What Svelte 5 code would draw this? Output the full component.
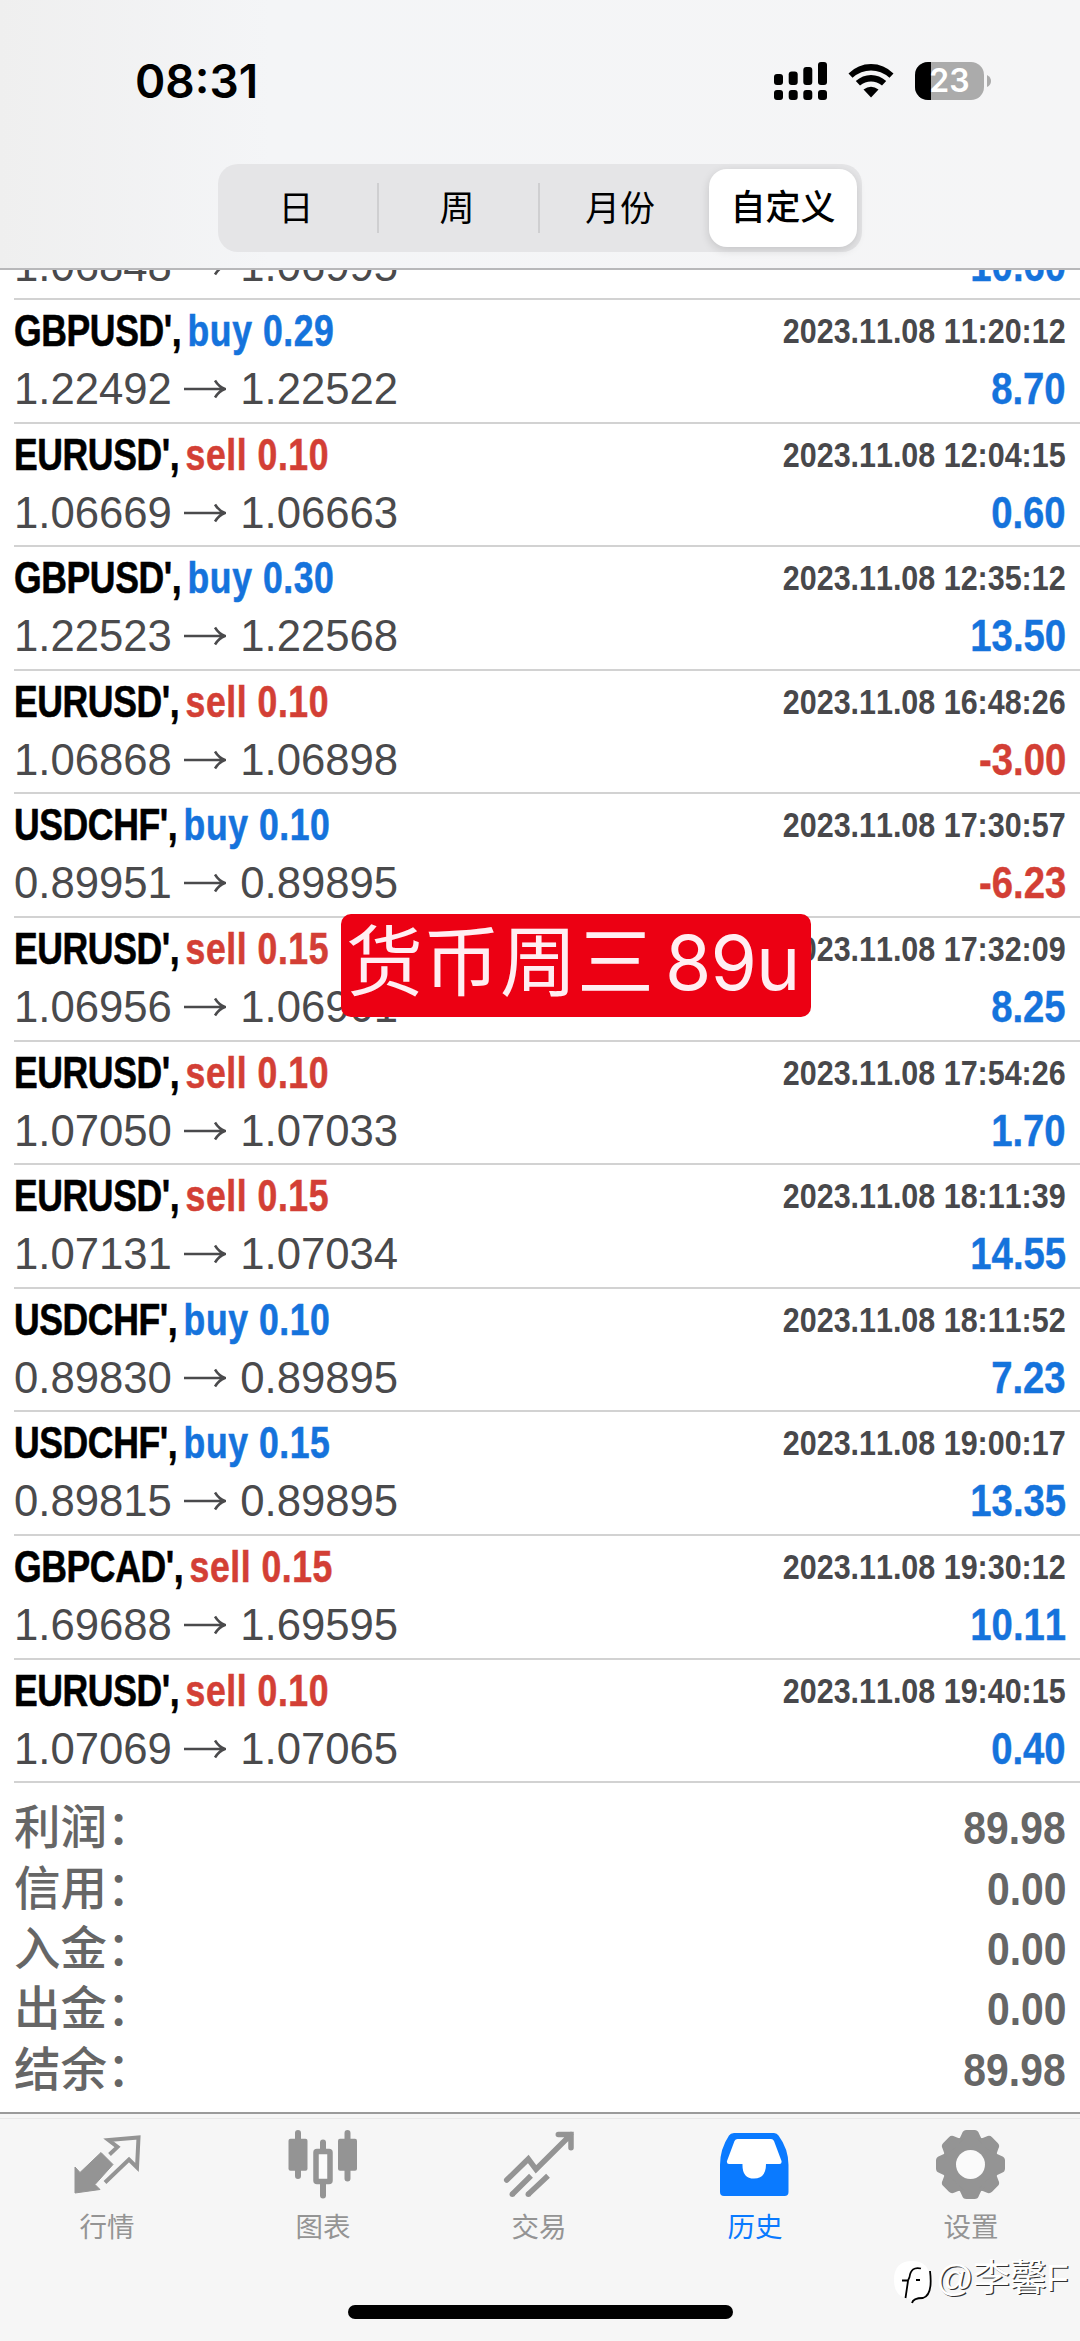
<script lang="ts">
	const segments = ['日', '周', '月份', '自定义'];

	const deals = [
		{ symbol: "GBPUSD'", side: 'buy', volume: '0.29', open: '1.22492', close: '1.22522', time: '2023.11.08 11:20:12', profit: '8.70' },
		{ symbol: "EURUSD'", side: 'sell', volume: '0.10', open: '1.06669', close: '1.06663', time: '2023.11.08 12:04:15', profit: '0.60' },
		{ symbol: "GBPUSD'", side: 'buy', volume: '0.30', open: '1.22523', close: '1.22568', time: '2023.11.08 12:35:12', profit: '13.50' },
		{ symbol: "EURUSD'", side: 'sell', volume: '0.10', open: '1.06868', close: '1.06898', time: '2023.11.08 16:48:26', profit: '-3.00' },
		{ symbol: "USDCHF'", side: 'buy', volume: '0.10', open: '0.89951', close: '0.89895', time: '2023.11.08 17:30:57', profit: '-6.23' },
		{ symbol: "EURUSD'", side: 'sell', volume: '0.15', open: '1.06956', close: '1.06901', time: '2023.11.08 17:32:09', profit: '8.25' },
		{ symbol: "EURUSD'", side: 'sell', volume: '0.10', open: '1.07050', close: '1.07033', time: '2023.11.08 17:54:26', profit: '1.70' },
		{ symbol: "EURUSD'", side: 'sell', volume: '0.15', open: '1.07131', close: '1.07034', time: '2023.11.08 18:11:39', profit: '14.55' },
		{ symbol: "USDCHF'", side: 'buy', volume: '0.10', open: '0.89830', close: '0.89895', time: '2023.11.08 18:11:52', profit: '7.23' },
		{ symbol: "USDCHF'", side: 'buy', volume: '0.15', open: '0.89815', close: '0.89895', time: '2023.11.08 19:00:17', profit: '13.35' },
		{ symbol: "GBPCAD'", side: 'sell', volume: '0.15', open: '1.69688', close: '1.69595', time: '2023.11.08 19:30:12', profit: '10.11' },
		{ symbol: "EURUSD'", side: 'sell', volume: '0.10', open: '1.07069', close: '1.07065', time: '2023.11.08 19:40:15', profit: '0.40' }
	];

	const totals = [
		['利润：', '89.98'],
		['信用：', '0.00'],
		['入金：', '0.00'],
		['出金：', '0.00'],
		['结余：', '89.98']
	];

	let selected = 3;
	let tab = '历史';
</script>

{#snippet prices(open: string, close: string)}
	<span class="prices">
		{open}
		<svg class="arrow" width="42" height="20" viewBox="0 0 42 20">
			<path d="M0 10H40M31 1.5Q35 8 41 10Q35 12 31 18.5" />
		</svg>
		{close}
	</span>
{/snippet}

<div class="screen">
	<header>
		<div class="status">
			<span class="clock">08:31</span>
			<div class="indicators">
				<svg width="54" height="38" viewBox="0 0 54 38">
					<rect x="0" y="12" width="9" height="11" rx="3" />
					<rect x="14.7" y="9.5" width="9" height="13.5" rx="3" />
					<rect x="29.3" y="5" width="9" height="18" rx="3" />
					<rect x="44" y="0" width="9" height="23" rx="3" />
					<rect x="0" y="28" width="9" height="10" rx="3" />
					<rect x="14.7" y="28" width="9" height="10" rx="3" />
					<rect x="29.3" y="28" width="9" height="10" rx="3" />
					<rect x="44" y="28" width="9" height="10" rx="3" />
				</svg>
				<svg width="46" height="35" viewBox="0 0 46 35">
					<path d="M0.5 10.5Q10 1 23 1T45.5 10.5L41.5 14.7Q33 7.5 23 7.5T4.5 14.7Z" />
					<path d="M7.8 18Q14.5 12 23 12T38.200 18L34 22.5Q29 18.5 23 18.5T12 22.5Z" />
					<path d="M15.5 26.5Q23 21 30.5 26.5L23 34.5Z" />
				</svg>
				<div class="battery"><i></i><b>23</b></div>
				<svg class="nub" width="4" height="12" viewBox="0 0 4 12"><path d="M0 0Q4 2 4 6T0 12Z" fill="#ababab" /></svg>
			</div>
		</div>
		<nav class="segments">
			{#each segments as name, i}
				<button class:on={i === selected} on:click={() => (selected = i)}>{name}</button>
			{/each}
		</nav>
	</header>

	<main>
		<div class="row cut">
			<div class="line second">
				{@render prices('1.06848', '1.06995')}
				<span class="profit">10.60</span>
			</div>
		</div>
		{#each deals as deal}
			<div class="row">
				<div class="line first">
					<span class="title">{deal.symbol}, <em class={deal.side}>{deal.side} {deal.volume}</em></span>
					<span class="time">{deal.time}</span>
				</div>
				<div class="line second">
					{@render prices(deal.open, deal.close)}
					<span class="profit" class:loss={deal.profit.startsWith('-')}>{deal.profit}</span>
				</div>
			</div>
		{/each}

		<div class="totals">
			{#each totals as [label, value]}
				<div class="total"><span>{label}</span><span class="amount">{value}</span></div>
			{/each}
		</div>
		<div class="note">货币周三<span>89u</span></div>
	</main>

	<footer>
		<div class="tabs">
			<button class:active={tab === '行情'} on:click={() => (tab = '行情')}>
				<svg width="72" height="72" viewBox="0 0 72 72">
					<path fill="currentColor" stroke="currentColor" stroke-linejoin="round" d="M5 37L10 42.5L31 22.5L43 34.5L25 54.5L30 59.5L5 63Z" />
					<path fill="none" stroke="currentColor" stroke-width="4" d="M39.500 24.5L47.500 17L38.500 10L68.5 7.5L67 37.5L59 29.5L35 52.5" />
				</svg>
				行情
			</button>
			<button class:active={tab === '图表'} on:click={() => (tab = '图表')}>
				<svg width="72" height="72" viewBox="0 0 72 72">
					<path stroke="currentColor" stroke-width="6" stroke-linecap="round" d="M12 3V46M37 12.500V20M37 54V65.500M61.500 3V48.500" />
					<rect x="2.500" y="8.700" width="19" height="32" rx="2" fill="currentColor" />
					<rect x="52" y="8.700" width="19" height="32" rx="2" fill="currentColor" />
					<rect x="30" y="21.500" width="14" height="30" rx="1" fill="#fafafa" stroke="currentColor" stroke-width="5.500" />
				</svg>
				图表
			</button>
			<button class:active={tab === '交易'} on:click={() => (tab = '交易')}>
				<svg width="72" height="72" viewBox="0 0 72 72">
					<g fill="none" stroke="currentColor" stroke-width="5.500">
						<path stroke-linecap="round" d="M4.700 50L26.300 29L34 39.300L69 4.500M56.300 4.500H69V17.700" />
						<path d="M10.300 64.300L29 45.700M26.300 64.300L46 45.700" />
					</g>
					<g fill="currentColor">
						<circle cx="10.300" cy="64.300" r="2.750" />
						<circle cx="26.300" cy="64.300" r="2.750" />
					</g>
				</svg>
				交易
			</button>
			<button class:active={tab === '历史'} on:click={() => (tab = '历史')}>
				<svg width="72" height="72" viewBox="0 0 72 72">
					<path fill="currentColor" d="M16 3H56Q59 3 60.500 5.500Q70.500 19 70.500 35V62Q70.500 66 66.500 66H6Q2 66 2 62V35Q2 19 11 5.500Q12.500 3 16 3Z" />
					<path fill="#fff" d="M19.500 9H53Q55 9 56 11L63.500 31Q64 34 61.500 34H48Q48 48.500 36 48.500T24.500 34H11Q8.500 34 9 31L16.500 11Q17.500 9 19.500 9Z" />
				</svg>
				历史
			</button>
			<button class:active={tab === '设置'} on:click={() => (tab = '设置')}>
				<svg width="72" height="72" viewBox="-36.500 -34.500 72 72">
					<g fill="currentColor">
						<circle r="27.500" />
						{#each [0, 45, 90, 135, 180, 225, 270, 315] as angle}
							<path transform="rotate({angle})" d="M-14 -23Q-10 -26 -8.500 -31Q-7.500 -34.500 -4 -34.500H4Q7.500 -34.500 8.500 -31Q10 -26 14 -23Z" />
						{/each}
					</g>
					<circle r="14.500" fill="#fafafa" />
				</svg>
				设置
			</button>
		</div>
		<div class="home"></div>
		<div class="signature">
			<svg width="40" height="46" viewBox="0 0 40 46">
				<path fill="#fff" d="M19 1Q37 1 37 20Q37 36 24 39L18 45V39Q1 38 1 20Q1 1 19 1Z" />
				<path fill="none" stroke="#000" stroke-width="1.800" d="M28 8.500Q18 6 16.500 17L15 20.500H9M15 21L12.500 38M23 20H27M37 11Q40 35 30 38Q20 38 19 43" />
			</svg>
			<span>@李馨F</span>
		</div>
	</footer>
</div>

<style>
	:global(body) {
		background: #fff;
	}
	.screen {
		width: 1080px;
		height: 2341px;
		display: flex;
		flex-direction: column;
		overflow: hidden;
		font-family: 'Liberation Sans', 'Noto Sans CJK SC', sans-serif;
		font-kerning: none;
	}
	header {
		height: 270px;
		flex: none;
		background: linear-gradient(90deg, #efefef, #f4f5f7 25%, #f5f5f6);
		border-bottom: 2px solid #b8b8ba;
		box-sizing: border-box;
		position: relative;
		z-index: 1;
	}
	.status {
		height: 164px;
		padding: 0 89px 3px 135px;
		box-sizing: border-box;
		display: flex;
		justify-content: space-between;
		align-items: center;
	}
	.clock {
		font: 600 46px Inter, sans-serif;
	}
	.indicators {
		display: flex;
		align-items: center;
	}
	.indicators svg + svg {
		margin: 0 21px 0 20px;
	}
	.battery {
		width: 69px;
		height: 38px;
		border-radius: 13px;
		background: #ababab;
		overflow: hidden;
		display: grid;
	}
	.battery i {
		grid-area: 1 / 1;
		width: 16px;
		background: #000;
	}
	.battery b {
		grid-area: 1 / 1;
		font: 600 32px/38px Inter, sans-serif;
		text-align: center;
		color: #fff;
	}
	.indicators .battery + .nub {
		margin-left: 3px;
	}
	.segments {
		width: 644px;
		height: 88px;
		margin: 0 auto;
		border-radius: 20px;
		background: #e5e5e7;
		display: flex;
		align-items: center;
	}
	button {
		border: 0;
		padding: 0;
		background: none;
		font: inherit;
	}
	.segments button {
		width: 161px;
		height: 50px;
		flex: none;
		font-size: 35px;
		line-height: 52px;
		color: #000;
		box-sizing: border-box;
		padding-right: 4px;
	}
	.segments button:nth-child(1),
	.segments button:nth-child(2) {
		border-right: 2px solid #cfcfd1;
		padding-right: 3px;
	}
	.segments button:nth-child(3) {
		padding-left: 3px;
	}
	.segments .on {
		width: 148px;
		height: 78px;
		margin-left: 8px;
		border-radius: 18px;
		background: #fff;
		padding: 0;
		font-weight: 500;
		box-shadow: 0 3px 10px rgba(0, 0, 0, 0.14);
	}
	main {
		height: 1842px;
		flex: none;
		overflow: hidden;
		position: relative;
	}
	.row {
		height: 123.6px;
		margin-left: 14px;
		padding-right: 14px;
		border-bottom: 2px solid #d2d2d2;
		box-sizing: border-box;
	}
	.cut {
		height: 30px;
		display: flex;
		align-items: flex-end;
	}
	.cut .line {
		flex: 1;
	}
	.line {
		display: flex;
		justify-content: space-between;
		white-space: nowrap;
	}
	.first {
		height: 62px;
		line-height: 62px;
	}
	.second {
		height: 59px;
		line-height: 54px;
	}
	.title {
		font-size: 45px;
		font-weight: bold;
		letter-spacing: -0.5px;
		-webkit-text-stroke: 0.6px;
		transform: scaleX(0.79);
		transform-origin: left;
	}
	.title em {
		font-style: normal;
		letter-spacing: 0.7px;
		margin-left: -4px;
	}
	.buy,
	.profit {
		color: #1573dc;
	}
	.sell,
	.profit.loss {
		color: #d33f35;
	}
	.time {
		font-size: 35.5px;
		font-weight: bold;
		color: #48484b;
		transform: scaleX(0.858);
		transform-origin: right;
	}
	.prices {
		font-size: 43.7px;
		color: #4a4a4c;
	}
	.arrow {
		fill: none;
		stroke: #4a4a4c;
		stroke-width: 2.5;
		vertical-align: 5px;
		margin-right: 2px;
	}
	.profit {
		font-size: 44px;
		font-weight: bold;
		-webkit-text-stroke: 0.4px;
		transform: scaleX(0.87);
		transform-origin: right;
	}
	.totals {
		padding: 15px 14px 0;
	}
	.total {
		height: 60.4px;
		line-height: 60px;
		display: flex;
		justify-content: space-between;
		font-size: 46.5px;
		font-weight: 500;
		color: #666;
	}
	.amount {
		font-weight: bold;
		font-size: 47px;
		transform: scaleX(0.87);
		transform-origin: right;
	}
	.note {
		position: absolute;
		left: 341px;
		top: 644px;
		width: 470px;
		height: 103px;
		border-radius: 10px;
		background: #ec0013;
		color: #ffeef2;
		font: 77px/86px 'Noto Sans CJK SC', sans-serif;
		box-sizing: border-box;
		padding-left: 5px;
		white-space: nowrap;
	}
	.note span {
		font: 400 75px Inter, sans-serif;
		margin-left: 11px;
		letter-spacing: -1px;
	}
	footer {
		flex: 1;
		background: #f6f6f6;
		border-top: 2px solid #9b9b9b;
		position: relative;
	}
	.tabs {
		display: flex;
		margin: 4px 0 0 -1px;
		border-top: 1px solid #e8e8e8;
		padding-top: 11px;
	}
	.tabs button {
		width: 216px;
		display: flex;
		flex-direction: column;
		align-items: center;
		gap: 8px;
		font-size: 27.5px;
		line-height: 36px;
		color: #949494;
	}
	.tabs svg {
		margin-left: -2px;
	}
	.tabs .active {
		color: #0a7aff;
	}
	.home {
		width: 385px;
		height: 14px;
		border-radius: 7px;
		background: #000;
		position: absolute;
		left: 348px;
		top: 191px;
	}
	.signature {
		position: absolute;
		left: 893px;
		top: 138px;
		display: flex;
		align-items: center;
		gap: 3px;
		white-space: nowrap;
		font-size: 37px;
		line-height: 54px;
		color: #fff;
	}
	.signature svg {
		margin-top: 8px;
	}
	.signature span {
		letter-spacing: -0.5px;
		text-shadow: 1.2px 1.2px 0 #333;
	}
</style>
